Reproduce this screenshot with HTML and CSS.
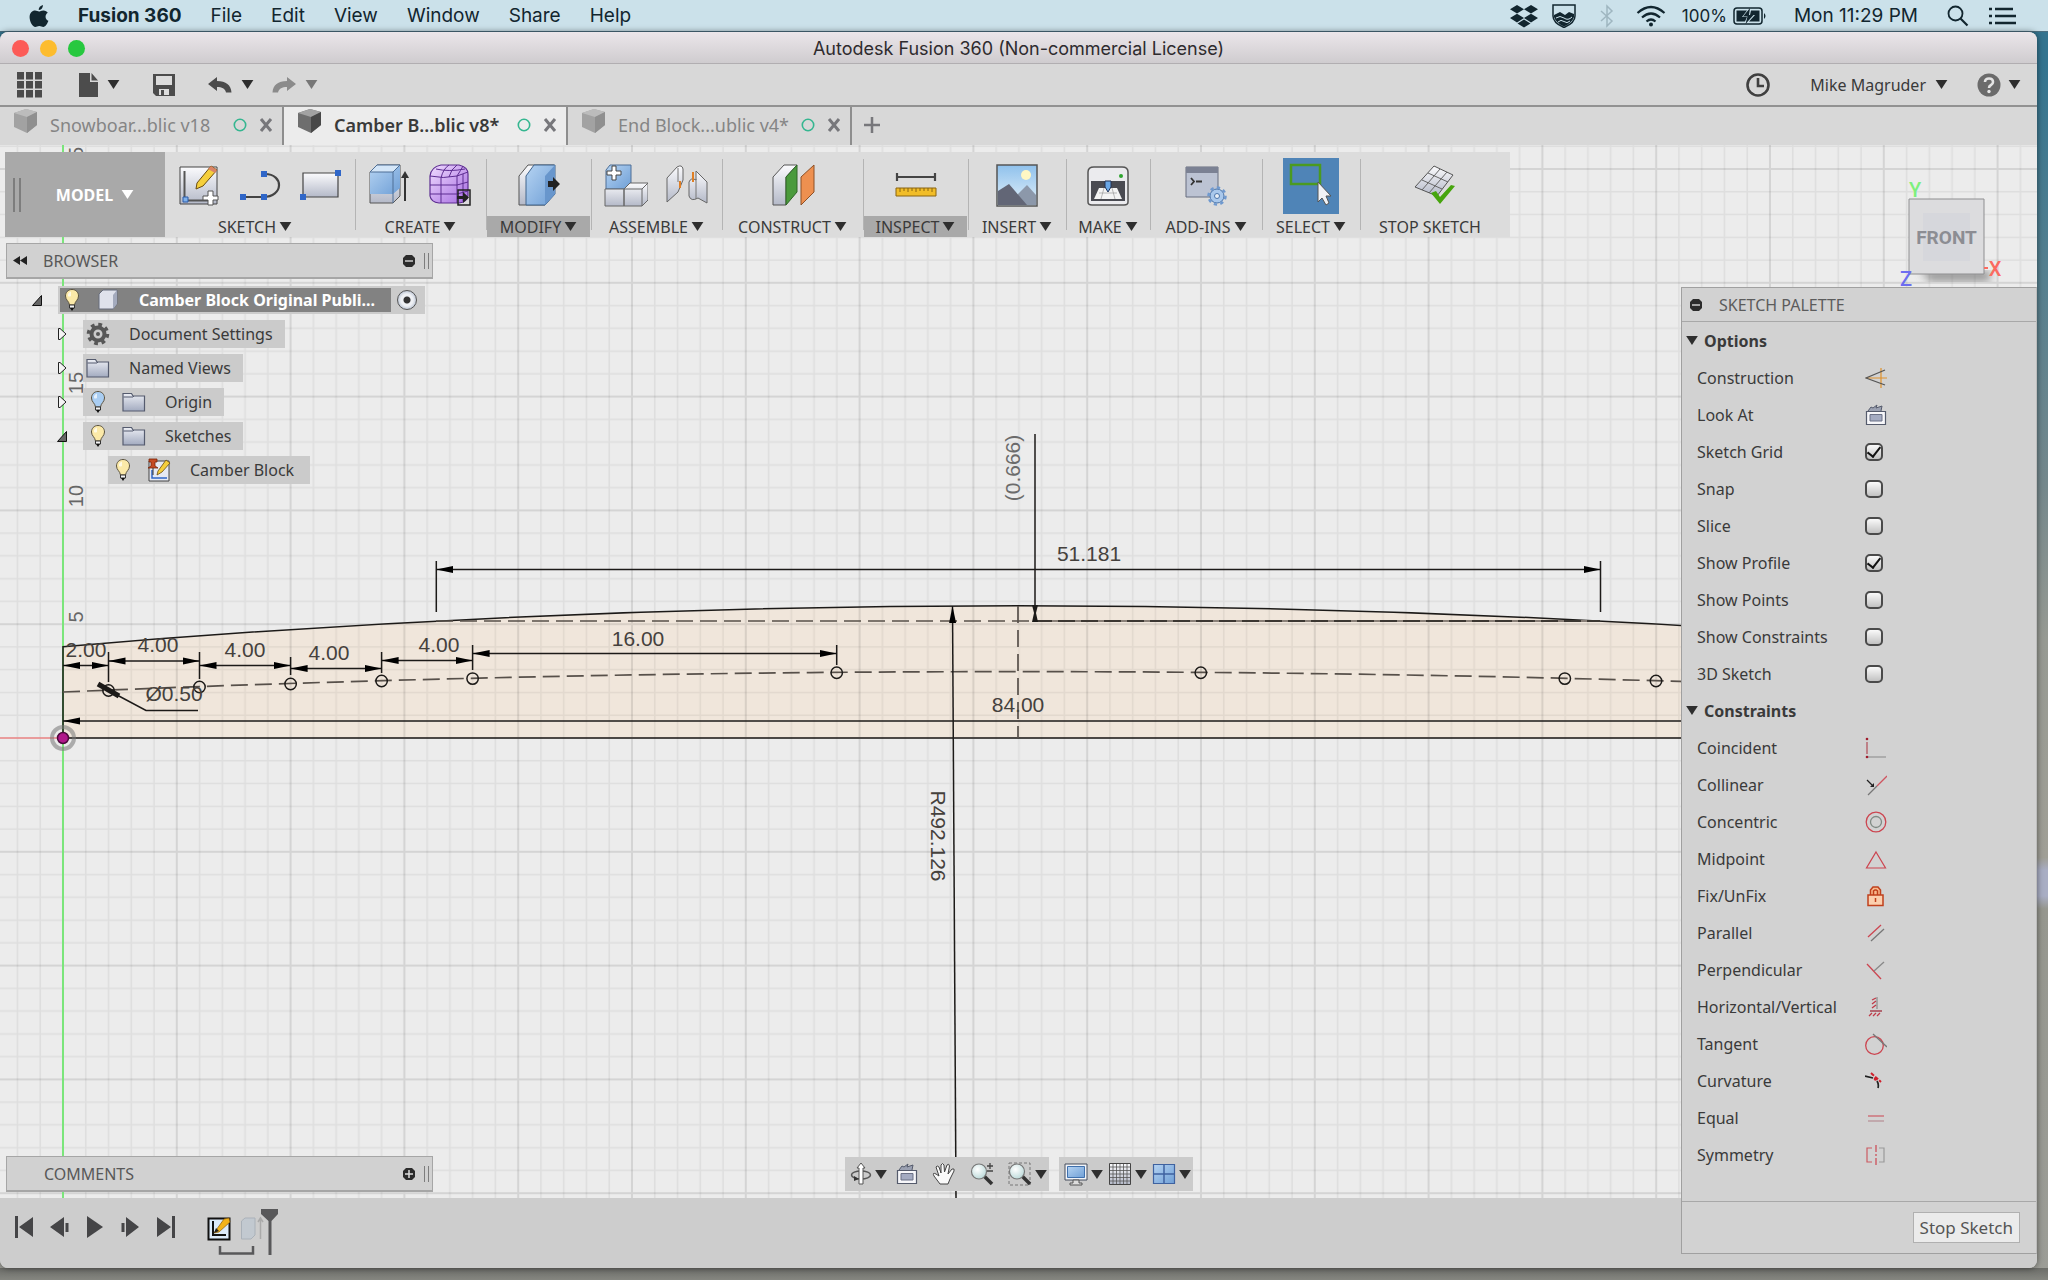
FILE: index.html
```html
<!DOCTYPE html>
<html lang="en">
<head>
<meta charset="utf-8">
<title>Autodesk Fusion 360 (Non-commercial License)</title>
<link rel="stylesheet" href="styles.css">
</head>
<body>
<svg class="sprite" width="0" height="0" aria-hidden="true">
  <defs>
    <linearGradient id="steel" x1="0" y1="0" x2="0" y2="1"><stop offset="0" stop-color="#fbfbfd"/><stop offset="1" stop-color="#b4b9c8"/></linearGradient>
    <linearGradient id="blue" x1="0" y1="0" x2="1" y2="1"><stop offset="0" stop-color="#b5d3f2"/><stop offset="1" stop-color="#6f9fd6"/></linearGradient>
    <linearGradient id="violet" x1="0" y1="0" x2="1" y2="1"><stop offset="0" stop-color="#f0dcff"/><stop offset="1" stop-color="#a56be0"/></linearGradient>
    <linearGradient id="sky" x1="0" y1="0" x2="0" y2="1"><stop offset="0" stop-color="#8fc1ec"/><stop offset="1" stop-color="#e3f1fa"/></linearGradient>
    <linearGradient id="folderFill" x1="0" y1="0" x2="0" y2="1"><stop offset="0" stop-color="#eceef4"/><stop offset="1" stop-color="#a3abc0"/></linearGradient>
    <radialGradient id="lens" cx=".4" cy=".35" r=".7"><stop offset="0" stop-color="#ffffff"/><stop offset="1" stop-color="#b9d8d8"/></radialGradient>
  </defs>
  <symbol id="caret" viewBox="0 0 13 10"><path d="M0 0H13L6.500 10Z"/></symbol>
  <symbol id="cube" viewBox="0 0 25 26"><path d="M1 5L13 1L24 4V17L14 25L1 19Z" fill="#6e6e6e"/><path d="M1 5L13 1L24 4L14 9Z" fill="#a2a2a2"/><path d="M14 9L24 4V17L14 25Z" fill="#484848"/></symbol>
  <symbol id="close" viewBox="0 0 14 14"><path d="M2 1L12 13M12 1L2 13" stroke="#77777b" stroke-width="3" fill="none"/></symbol>
  <symbol id="sync" viewBox="0 0 14 14"><circle cx="7" cy="7" r="5.700" fill="none" stroke="#35b690" stroke-width="1.600"/></symbol>
  <symbol id="bulb" viewBox="0 0 24 24"><path d="M12 1.500C8 1.500 5.500 4.500 5.500 8C5.500 12 9 13 9.500 17H14.500C15 13 18.500 12 18.500 8C18.500 4.500 16 1.500 12 1.500Z" stroke="#5b5340" stroke-width="1"/><path d="M9.500 17H14.500V20H9.500Z" fill="#f4f4f4" stroke="#333" stroke-width="1"/><path d="M10 20H14L12 23Z" fill="#111"/><path d="M8 6Q9 4 11 3.500V8Q9 9 8 8Z" fill="#fff" opacity=".7"/></symbol>
  <symbol id="folder" viewBox="0 0 24 24"><path d="M1 21V3.500H9.500L11 6H22.500V21Z" fill="url(#folderFill)" stroke="#555b6e" stroke-width="1.200"/><path d="M1.500 7H11L12 6" fill="none" stroke="#555b6e"/></symbol>
  <symbol id="open" viewBox="0 0 10 11"><path d="M9.500 .5V10.500H.5Z" fill="#666" stroke="#111"/></symbol>
  <symbol id="closed" viewBox="0 0 10 12"><path d="M1.500 .5H3L9 6L3 11.500H1.500Z" fill="#f4f4f4" stroke="#222"/></symbol>
  <symbol id="minus" viewBox="0 0 12 12"><path d="M3 0H9L12 3V9L9 12H3L0 9V3Z" fill="#2c2c2c"/><path d="M2 6H10" stroke="#ccc" stroke-width="1.500"/></symbol>
  <symbol id="plusdot" viewBox="0 0 12 12"><path d="M3 0H9L12 3V9L9 12H3L0 9V3Z" fill="#2c2c2c"/><path d="M2 6H10M6 2V10" stroke="#ddd" stroke-width="1.500"/></symbol>
  <symbol id="lookat" viewBox="0 0 22 22"><path d="M3 7L6 3L8 4L12 1L11 4L17 2L16 7" fill="#9ba1b2" stroke="#555b6c"/><path d="M1.500 7.500H20.500V20.500H1.500Z" fill="#f7f7fa" stroke="#555b6c" stroke-width="1.200"/><path d="M5 10.500H17V17H5Z" fill="#a4abc2" stroke="#6a7085"/></symbol>
</svg>

<header class="menubar">
  <nav class="menus" aria-label="Menu bar">
    <button class="menu apple" aria-label="Apple"><svg width="20" height="24" viewBox="0 0 20 24"><path d="M14 1C14 4 12 6 9.700 6C9.500 3.500 11.500 1.500 14 1Z"/><path d="M10 7.500C11 7.500 12.500 6.300 14.500 6.400C16.500 6.500 18 7.500 18.800 8.700C15.500 10.700 16 15.500 19.400 16.800C18.500 19.500 16.500 23 14.300 23C12.800 23 12.200 22 10.300 22C8.400 22 7.700 23 6.400 23C3.500 23 .6 17.500 .6 13.300C.6 9 3.300 6.600 6 6.600C7.700 6.600 9 7.500 10 7.500Z"/></svg></button>
    <button class="menu strong">Fusion 360</button>
    <button class="menu">File</button>
    <button class="menu">Edit</button>
    <button class="menu">View</button>
    <button class="menu">Window</button>
    <button class="menu">Share</button>
    <button class="menu">Help</button>
  </nav>
  <div class="status">
    <svg width="28" height="24" viewBox="0 0 28 24"><path d="M7 1L14 5.300L7 9.600L0 5.300ZM21 1L28 5.300L21 9.600L14 5.300ZM7 9.800L14 14L7 18.400L0 14ZM21 9.800L28 14L21 18.400L14 14ZM14 15.500L20.500 19.500L14 23.500L7.500 19.500Z"/></svg>
    <svg class="shield" width="24" height="24" viewBox="0 0 24 24"><path d="M1 1H23V12C23 18 18 21 12 23.500C6 21 1 18 1 12Z" fill="none" stroke="#12262f" stroke-width="1.500"/><path d="M2 11L8 8L13 11L17 8L22 10V13Q20 19 12 22.500Q4 19 2 13Z"/><path d="M4 14Q8 11 12 14T20 13M6 18Q9 15 12 17.500T18 17" stroke="#cbe1ea" fill="none"/></svg>
    <svg class="bluetooth" width="14" height="24" viewBox="0 0 14 24"><path d="M1 7L12 17L7 22V2L12 7L1 17" fill="none" stroke="#9fb6c0" stroke-width="1.500"/></svg>
    <svg class="wifi" width="30" height="22" viewBox="0 0 30 22"><g fill="none" stroke="#12262f" stroke-width="2.200"><path d="M1.500 8Q15 -4 28.500 8"/><path d="M6 12.500Q15 4.500 24 12.500"/><path d="M10.500 16.500Q15 12.500 19.500 16.500"/></g><circle cx="15" cy="19.500" r="2"/></svg>
    <span class="charge">100%</span>
    <svg width="34" height="18" viewBox="0 0 34 18"><rect x="1" y="1" width="28" height="16" rx="3" fill="none" stroke="#12262f" stroke-width="1.500"/><path d="M3.500 3.500H14L9 10H14L12 14.500H3.500ZM18 3.500H26.500V14.500H16L22 8H17Z"/><path d="M17 1L10 9.500H14.500L12.500 17L20.500 8H16Z"/><path d="M31 6Q34 9 31 12Z"/></svg>
    <time class="clock">Mon 11:29 PM</time>
    <svg class="search" width="22" height="22" viewBox="0 0 22 22"><circle cx="8.500" cy="8.500" r="7" fill="none" stroke="#12262f" stroke-width="1.800"/><path d="M13.500 13.500L20.500 20.500" stroke="#12262f" stroke-width="2.200"/></svg>
    <svg width="27" height="18" viewBox="0 0 27 18"><path d="M6 2H24M6 9H27M6 16H27" stroke="#12262f" stroke-width="2.500"/><path d="M0 2H3M0 9H3M0 16H3" stroke="#12262f" stroke-width="2.500"/></svg>
  </div>
</header>

<main class="window">
  <div class="titlebar">
    <div class="lights"><button class="light red" aria-label="Close"></button><button class="light amber" aria-label="Minimise"></button><button class="light green" aria-label="Zoom"></button></div>
    <h1 class="title">Autodesk Fusion 360 (Non-commercial License)</h1>
  </div>

  <div class="quickbar">
    <button class="quick" aria-label="Data panel"><svg width="25" height="26" viewBox="0 0 25 26"><path d="M0 0H7V7.500H0ZM9 0H16V7.500H9ZM18 0H25V7.500H18ZM0 9H7V16.500H0ZM9 9H16V16.500H9ZM18 9H25V16.500H18ZM0 18H7V25.500H0ZM9 18H16V25.500H9ZM18 18H25V25.500H18Z" fill="#4c4c4c"/></svg></button>
    <button class="quick" aria-label="File"><svg width="19" height="24" viewBox="0 0 19 24"><path d="M0 0H11V9H19V24H0ZM12.500 0L19 7.500H12.500Z" fill="#4c4c4c"/></svg><svg class="caret" width="13" height="9"><use href="#caret"/></svg></button>
    <button class="quick" aria-label="Save"><svg width="24" height="24" viewBox="0 0 24 24"><path d="M1 1H23V23H4L1 20Z" fill="#4c4c4c"/><path d="M4 3H20V12H4ZM7 16H17V22H7Z" fill="#dcdcdc"/><path d="M9 17H12V22H9Z" fill="#4c4c4c"/></svg></button>
    <button class="quick" aria-label="Undo"><svg width="24" height="16" viewBox="0 0 24 16"><path d="M9 0V4C18 4 23 8 23.500 15.500H18C17 11.500 14 10 9 10V14L0 7Z" fill="#4c4c4c"/></svg><svg class="caret" width="13" height="9"><use href="#caret"/></svg></button>
    <button class="quick dim" aria-label="Redo"><svg width="24" height="16" viewBox="0 0 24 16"><path d="M15 0V4C6 4 1 8 .5 15.500H6C7 11.500 10 10 15 10V14L24 7Z" fill="#8b8b8b"/></svg><svg class="caret" width="13" height="9"><use href="#caret"/></svg></button>
    <div class="account">
      <button class="quick" aria-label="Job status"><svg width="24" height="24" viewBox="0 0 24 24"><circle cx="12" cy="12" r="10.500" fill="none" stroke="#404040" stroke-width="2.600"/><path d="M12 5V13H18" fill="none" stroke="#404040" stroke-width="2.600"/></svg></button>
      <button class="quick user">Mike Magruder<svg class="caret" width="13" height="9"><use href="#caret"/></svg></button>
      <button class="quick help" aria-label="Help"><svg width="24" height="24" viewBox="0 0 24 24"><circle cx="12" cy="12" r="11.500" fill="#6b6b6b"/><path d="M8 9Q8 5.500 12 5.500T16 9Q16 11 14 12T12 15" fill="none" stroke="#e4e4e4" stroke-width="2.600"/><circle cx="12" cy="18.500" r="1.700" fill="#e4e4e4"/></svg><svg class="caret" width="13" height="9"><use href="#caret"/></svg></button>
    </div>
  </div>

  <div class="tabs">
    <div class="tab faded"><svg class="doc" width="25" height="26"><use href="#cube"/></svg><button class="tabname">Snowboar...blic v18</button><svg width="14" height="14"><use href="#sync"/></svg><button class="x" aria-label="Close tab"><svg width="14" height="14"><use href="#close"/></svg></button></div>
    <div class="tab current"><svg class="doc" width="25" height="26"><use href="#cube"/></svg><button class="tabname">Camber B...blic v8*</button><svg width="14" height="14"><use href="#sync"/></svg><button class="x" aria-label="Close tab"><svg width="14" height="14"><use href="#close"/></svg></button></div>
    <div class="tab faded"><svg class="doc" width="25" height="26"><use href="#cube"/></svg><button class="tabname">End Block...ublic v4*</button><svg width="14" height="14"><use href="#sync"/></svg><button class="x" aria-label="Close tab"><svg width="14" height="14"><use href="#close"/></svg></button></div>
    <button class="newtab" aria-label="New tab"><svg width="16" height="16" viewBox="0 0 16 16"><path d="M8 0V16M0 8H16" stroke="#77777b" stroke-width="2.500"/></svg></button>
  </div>

  <section class="viewport" aria-label="Canvas">
    <svg class="drawing" width="100%" height="100%">
      <defs>
        <pattern id="grid" patternUnits="userSpaceOnUse" x="63" y="24" width="113.800" height="113.800">
          <path d="M22.760 0V113.800M45.520 0V113.800M68.280 0V113.800M91.040 0V113.800M0 22.760H113.800M0 45.520H113.800M0 68.280H113.800M0 91.040H113.800" stroke="#000" stroke-opacity=".06" stroke-width="1.500"/>
          <path d="M0 0V113.800M113.800 0V113.800M0 0H113.800M0 113.800H113.800" stroke="#000" stroke-opacity=".1" stroke-width="2"/>
        </pattern>
        <marker id="arrow" markerUnits="userSpaceOnUse" markerWidth="18" markerHeight="8" refX="17" refY="4" orient="auto-start-reverse"><path d="M0 .5L17 4L0 7.500Z"/></marker>
      </defs>
      <g transform="translate(0 -145)">
        <path d="M63 738V646.700A11196 11196 0 0 1 1973 646.700V738Z" fill="#f0e6db"/>
      </g>
      <rect width="100%" height="100%" fill="url(#grid)"/>
      <g transform="translate(0 -145)" fill="none" stroke="#1c1a18" stroke-width="1.500">
        <path d="M63 145V738" stroke="#7be57b" stroke-width="2"/>
        <path d="M63 738V1198" stroke="#7be57b" stroke-width="2"/>
        <path d="M0 738H63" stroke="#f08a8a"/>
        <path d="M63 738V646.700A11196 11196 0 0 1 1973 646.700V738Z"/>
        <g stroke="#57504a" stroke-dasharray="17 7" stroke-width="1.700">
          <path d="M63 692A22392 22392 0 0 1 1973 692"/>
          <path d="M436 621H1035"/>
          <path d="M1018 606V738"/>
        </g>
        <path d="M1035 621H1600" stroke="#8a8078" stroke-width="2"/>
        <path d="M1035 621H1600" stroke-dasharray="17 6" stroke-width="2" stroke="#3c3732"/>
        <g>
          <circle cx="108.500" cy="690.500" r="5.700"/><circle cx="199.500" cy="687" r="5.700"/><circle cx="290.600" cy="684" r="5.700"/><circle cx="381.600" cy="681" r="5.700"/><circle cx="472.600" cy="678.600" r="5.700"/><circle cx="836.700" cy="672.700" r="5.700"/><circle cx="1200.800" cy="672.700" r="5.700"/><circle cx="1564.800" cy="678.600" r="5.700"/><circle cx="1656" cy="681" r="5.700"/>
        </g>
        <path d="M108.500 652V682M199.500 652V679M290.600 657V675M381.600 652V673M472.600 645V670M836.700 645V665M436.300 561V612M1600.500 561V612M1035 434V606"/>
        <g marker-start="url(#arrow)" marker-end="url(#arrow)">
          <path d="M63 665.500H108.500"/><path d="M108.500 661H199.500"/><path d="M199.500 665.500H290.600"/><path d="M290.600 668.500H381.600"/><path d="M381.600 660.500H472.600"/><path d="M472.600 653.500H836.700"/><path d="M436.300 569.500H1600.500"/>
        </g>
        <path d="M63 721H1973" marker-start="url(#arrow)"/>
        <path d="M952.500 606L956 1198" marker-start="url(#arrow)"/>
        <path d="M1032 605H1038L1036 613L1038 622H1032L1034 613Z" fill="#1c1a18" stroke="none"/>
        <path d="M98 684L119 696" stroke-width="5"/><path d="M117 695L146 710.500H198"/>
        <circle cx="63" cy="738" r="11" stroke="#777" stroke-opacity=".55" stroke-width="4"/>
        <circle cx="63" cy="738" r="5.500" fill="#b0188a" stroke="#4d0a3c"/>
      </g>
      <g transform="translate(0 -145)" class="dims">
        <text x="86" y="657">2.00</text><text x="158" y="652">4.00</text><text x="245" y="657">4.00</text><text x="329" y="660">4.00</text><text x="439" y="652">4.00</text>
        <text x="638" y="646">16.00</text><text x="1089" y="561">51.181</text><text x="1018" y="712">84.00</text><text x="174" y="701">Ø0.50</text>
        <text transform="translate(1020 468) rotate(-90)" class="driven">(0.666)</text>
        <text transform="translate(931 836) rotate(90)">R492.126</text>
        <g class="ruler">
          <text transform="translate(83 617) rotate(-90)">5</text><text transform="translate(83 496) rotate(-90)">10</text><text transform="translate(83 383) rotate(-90)">15</text><text transform="translate(83 158) rotate(-90)">25</text>
        </g>
      </g>
    </svg>

    <svg class="viewcube" width="112" height="118" viewBox="0 0 112 118">
      <defs><filter id="soft"><feGaussianBlur stdDeviation="4"/></filter></defs>
      <path d="M24 96H94V106H34Z" fill="#555" opacity=".6" filter="url(#soft)"/>
      <path d="M13 99V24H88V99Z" fill="#dcdcde" stroke="#8e8e90"/>
      <path d="M27 38H74V86H27Z" fill="#d6d7dc"/>
      <text x="50.500" y="69" class="face">FRONT</text>
      <text x="19" y="22" class="axis" fill="#7df07d">Y</text><text x="10" y="111" class="axis" fill="#6d6df0">Z</text><text x="99" y="101" class="axis" fill="#fb6b60">X</text>
      <path d="M88 93H92" stroke="#fb6b60" stroke-width="2"/>
    </svg>

    <div class="toolbar">
      <button class="workspace"><span class="grip"></span>MODEL<svg class="caret" width="13" height="9"><use href="#caret"/></svg></button>
      <div class="group wide"><div class="icons">
        <svg width="44" height="44" viewBox="0 0 44 44"><path d="M3 3H40V40H3Z" fill="url(#steel)" stroke="#444"/><path d="M7.500 7V36.500H32" fill="none" stroke="#555" stroke-width="2"/><path d="M6 33H11V38H6Z" fill="#7fb0ea" stroke="#2a5ba8"/><path d="M20 19L34 2L40 6L26 22L19 25Z" fill="#f5cf3c" stroke="#6a4d10"/><path d="M34 2L40 6L38 9L31 5Z" fill="#d98467"/><path d="M31 27H36V32H41V36H36V41H31V36H26V32H31Z" fill="#fff" stroke="#555"/></svg>
        <svg width="44" height="44" viewBox="0 0 44 44"><path d="M4 33H25M25 33C46 33 46 10 27 10" fill="none" stroke="#444" stroke-width="2.200"/><path d="M2 30H8V36H2ZM23 30H29V36H23ZM23 7H29V13H23Z" fill="#2f66c8"/></svg>
        <svg width="44" height="44" viewBox="0 0 44 44"><path d="M4 9H39V33H4Z" fill="url(#steel)" stroke="#444" stroke-width="1.200"/><path d="M36 6H42V12H36ZM1 30H7V36H1Z" fill="#2f66c8"/></svg>
      </div><button class="label">SKETCH<svg class="caret" width="13" height="9"><use href="#caret"/></svg></button></div>
      <div class="group"><div class="icons">
        <svg width="44" height="44" viewBox="0 0 44 44"><path d="M2 8L9 1H32V32L25 39H2Z" fill="url(#steel)" stroke="#555"/><path d="M2 8L9 1H32V24L25 30H2Z" fill="url(#blue)"/><path d="M2 8H25L32 1H9ZM25 8V39" fill="#d4e6f8" stroke="#4e6f96"/><path d="M37 37V10" stroke="#333" stroke-width="2"/><path d="M33 14L37 7L41 14Z" fill="#333"/></svg>
        <svg width="44" height="44" viewBox="0 0 44 44"><path d="M12 1H30Q39 3 39 10V32Q38 38 30 39H10Q2 38 1 32V12Q2 3 12 1Z" fill="url(#violet)" stroke="#5d2d91" stroke-width="1.200"/><path d="M1 12Q14 15 28 12L39 8M1 21H28L39 18M1 30H28L39 27M12 14V39M28 12V39M12 14Q14 5 20 1M28 12Q32 6 34 2M20 13Q22 5 28 1M34 10V37M7 5Q20 8 36 5" fill="none" stroke="#5d2d91"/><path d="M29 26H41V41H29Z" fill="none" stroke="#222" stroke-width="1.500"/><path d="M28 32H34V28L40 33.500L34 39V35H28Z" fill="#222"/></svg>
      </div><button class="label">CREATE<svg class="caret" width="13" height="9"><use href="#caret"/></svg></button></div>
      <div class="group on"><div class="icons">
        <svg width="44" height="44" viewBox="0 0 44 44"><path d="M2 12L11 1H37V30L28 41H2Z" fill="url(#steel)" stroke="#555"/><path d="M9 12L17 1H38V30L28 41H9Z" fill="url(#blue)" stroke="#41648c"/><path d="M28 12L38 1V30L28 41Z" fill="#6896cc"/><path d="M31 17H36V13L43 20L36 27V23H31Z" fill="#222"/></svg>
      </div><button class="label">MODIFY<svg class="caret" width="13" height="9"><use href="#caret"/></svg></button></div>
      <div class="group"><div class="icons">
        <svg width="44" height="44" viewBox="0 0 44 44"><path d="M2 6L6 1H27V19L20 25H2Z" fill="url(#blue)" stroke="#4e6f96"/><path d="M1 25H20V42H1ZM20 25L26 19H44V36L38 42H20Z" fill="url(#steel)" stroke="#666"/><path d="M20 25H38V42M38 25L44 19" fill="none" stroke="#666"/><path d="M8 2H12V7H17V11H12V16H8V11H3V7H8Z" fill="#fff" stroke="#444"/></svg>
        <svg width="44" height="44" viewBox="0 0 44 44"><path d="M2 14L12 3Q17 0 18 5V16L13 28L2 38Z" fill="url(#steel)" stroke="#666"/><path d="M24 18Q26 13 31 16V7L42 18V39L33 34Q26 38 24 32Z" fill="url(#steel)" stroke="#666"/><path d="M13 4V18M31 15V35" stroke="#777"/><path d="M15 17V24M28 8V18" stroke="#e07f25" stroke-width="2"/></svg>
      </div><button class="label">ASSEMBLE<svg class="caret" width="13" height="9"><use href="#caret"/></svg></button></div>
      <div class="group"><div class="icons">
        <svg width="44" height="44" viewBox="0 0 44 44"><path d="M2 13L13 1H26L15 13V41H2Z" fill="url(#steel)" stroke="#555"/><path d="M15 13L26 1V28L15 41Z" fill="#4a9a3c" stroke="#2f6427"/><path d="M30 13L43 1V28L30 41Z" fill="#ee9050" stroke="#8d5027"/></svg>
      </div><button class="label">CONSTRUCT<svg class="caret" width="13" height="9"><use href="#caret"/></svg></button></div>
      <div class="group on"><div class="icons">
        <svg width="44" height="44" viewBox="0 0 44 44"><path d="M3 13H41M3 9V17M41 9V17" stroke="#444" stroke-width="2.200"/><path d="M2 24H42V32H2Z" fill="#f1bd28" stroke="#8a6410"/><path d="M6 24V28M10 24V27M14 24V28M18 24V27M22 24V28M26 24V27M30 24V27M34 24V27M38 24V28" stroke="#8a6410"/></svg>
      </div><button class="label">INSPECT<svg class="caret" width="13" height="9"><use href="#caret"/></svg></button></div>
      <div class="group"><div class="icons">
        <svg width="44" height="44" viewBox="0 0 44 44"><path d="M2 1H42V42H2Z" fill="url(#sky)" stroke="#555" stroke-width="1.500"/><circle cx="31" cy="11" r="5" fill="#fff7c4"/><path d="M20 33L32 21L41 31V41H20Z" fill="#8c98aa"/><path d="M3 27L14 20L32 41H3Z" fill="#626676"/></svg>
      </div><button class="label">INSERT<svg class="caret" width="13" height="9"><use href="#caret"/></svg></button></div>
      <div class="group"><div class="icons">
        <svg width="44" height="44" viewBox="0 0 44 44"><path d="M2 14V8Q2 3 8 3H36Q42 3 42 8V38Q42 41 38 41H6Q2 41 2 38Z" fill="#ebebee" stroke="#555" stroke-width="1.500"/><path d="M5 17H39V37H5Z" fill="#4a4b52"/><path d="M13 24H31L36 35H8Z" fill="#f4f4f4"/><path d="M19 17H25V23L22 28L19 23Z" fill="#6aa7e6" stroke="#235"/><path d="M13 29H31M18 24L15 35M26 24L29 35" stroke="#999" stroke-width=".7"/><circle cx="35" cy="12" r="2" fill="#2fa52f"/></svg>
      </div><button class="label">MAKE<svg class="caret" width="13" height="9"><use href="#caret"/></svg></button></div>
      <div class="group"><div class="icons">
        <svg width="44" height="44" viewBox="0 0 44 44"><path d="M2 3H34V33H2Z" fill="#bcc3d3" stroke="#666d7f"/><path d="M2 3H34V9H2Z" fill="#7b8193"/><path d="M7 14L10 17.500L7 21M12 17.500H18" fill="none" stroke="#333" stroke-width="1.800"/><circle cx="33" cy="32" r="7" fill="#a9c8ec" stroke="#4c76ab"/><circle cx="33" cy="32" r="8.500" fill="none" stroke="#6f99cf" stroke-width="2.500" stroke-dasharray="3.300 3.300"/><circle cx="33" cy="32" r="2.500" fill="#e8eef6" stroke="#4c76ab"/></svg>
      </div><button class="label">ADD-INS<svg class="caret" width="13" height="9"><use href="#caret"/></svg></button></div>
      <div class="group"><div class="icons">
        <svg class="picked" width="56" height="56" viewBox="0 0 56 56"><path d="M8 7H37V26H8Z" fill="none" stroke="#4b9a20" stroke-width="2.500"/><path d="M35 24V44L39 40L43 47L46 45L43 38H48Z" fill="#f0f2f6" stroke="#555"/></svg>
      </div><button class="label">SELECT<svg class="caret" width="13" height="9"><use href="#caret"/></svg></button></div>
      <div class="group wide"><div class="icons">
        <svg width="44" height="44" viewBox="0 0 44 44"><path d="M21 2L40 11L24 32L2 23Z" fill="url(#steel)" stroke="#555"/><path d="M15 9L35 18M9 16L29 25M27 5L9 26M34 8L16 29" stroke="#666"/><path d="M18 29L23 27L27 33L38 21L42 22L27 40Z" fill="#47a50e"/></svg>
      </div><button class="label">STOP SKETCH</button></div>
    </div>

    <aside class="browser">
      <div class="panelhead"><svg width="14" height="9" viewBox="0 0 14 9"><path d="M7 0V9L0 4.500ZM14 0V9L7 4.500Z" fill="#222"/></svg><h2>BROWSER</h2><button class="dot" aria-label="Collapse"><svg width="12" height="12"><use href="#minus"/></svg></button><span class="grip small"></span></div>
      <ul class="tree">
        <li class="node l0"><svg class="twist" width="10" height="11"><use href="#open"/></svg><div class="chip root"><span class="name"><svg width="24" height="24" fill="#fbe9a8"><use href="#bulb"/></svg><svg width="24" height="24" viewBox="0 0 24 24"><path d="M3 6L7 2H21V16L17 21H3Z" fill="#dfe2ec" stroke="#666c7c"/><path d="M17 21V7L21 2V16Z" fill="#a3aabd"/></svg><b>Camber Block Original Publi...</b></span><input type="radio" checked aria-label="Activate component"></div></li>
        <li class="node l1"><svg class="twist" width="10" height="12"><use href="#closed"/></svg><div class="chip"><svg width="24" height="24" viewBox="0 0 24 24"><circle cx="12" cy="12" r="6.500" fill="none" stroke="#575757" stroke-width="4"/><circle cx="12" cy="12" r="9.500" fill="none" stroke="#575757" stroke-width="3.500" stroke-dasharray="3.730 3.730"/><circle cx="12" cy="12" r="2" fill="#575757"/></svg><span>Document Settings</span></div></li>
        <li class="node l1"><svg class="twist" width="10" height="12"><use href="#closed"/></svg><div class="chip"><svg width="24" height="24"><use href="#folder"/></svg><span>Named Views</span></div></li>
        <li class="node l1"><svg class="twist" width="10" height="12"><use href="#closed"/></svg><div class="chip"><svg width="24" height="24" fill="#a9cdf2"><use href="#bulb"/></svg><svg width="24" height="24"><use href="#folder"/></svg><span>Origin</span></div></li>
        <li class="node l1"><svg class="twist" width="10" height="11"><use href="#open"/></svg><div class="chip"><svg width="24" height="24" fill="#fbe9a8"><use href="#bulb"/></svg><svg width="24" height="24"><use href="#folder"/></svg><span>Sketches</span></div></li>
        <li class="node l2"><span class="twist"></span><div class="chip"><svg width="24" height="24" fill="#fbe9a8"><use href="#bulb"/></svg><svg width="24" height="24" viewBox="0 0 24 24"><path d="M2 3H22V23H2Z" fill="#e6e9f2" stroke="#444"/><path d="M5 12V20H20" fill="none" stroke="#2f66c8" stroke-width="1.500"/><path d="M11 13L19 2L23 5L15 14L10 17Z" fill="#f5cf3c" stroke="#6a4d10" stroke-width=".8"/><path d="M2 1H10V4H8V8L11 10H1L4 8V4H2Z" fill="#c54a22" stroke="#7a2508" stroke-width=".8"/><path d="M6 10V17" stroke="#333"/></svg><span>Camber Block</span></div></li>
      </ul>
    </aside>

    <div class="bottom">
      <div class="panelhead comments"><h2>COMMENTS</h2><button class="dot" aria-label="Expand"><svg width="12" height="12"><use href="#plusdot"/></svg></button><span class="grip small"></span></div>
      <div class="nav">
        <div class="navset">
          <button class="tool" aria-label="Orbit"><svg width="22" height="24" viewBox="0 0 22 24"><ellipse cx="11" cy="13" rx="9.500" ry="4" fill="none" stroke="#555" stroke-width="1.500"/><path d="M11 1L15 6H13V22H9V6H7Z" fill="#fff" stroke="#555"/><path d="M4 14L9 17L4 19Z" fill="#333"/></svg><svg class="caret" width="12" height="9"><use href="#caret"/></svg></button>
          <button class="tool look" aria-label="Look at"><svg width="22" height="22"><use href="#lookat"/></svg></button>
          <button class="tool" aria-label="Pan"><svg width="24" height="24" viewBox="0 0 24 24"><path d="M8 22L2 14Q0 10 4 12L7 14L4 5Q5 3 7 5L9 11V3Q10.500 0 12 3L12.500 10L15 3Q17 1 17.500 4L16 12L20 7Q23 6 22 9L18 17L16 22Z" fill="#fafafa" stroke="#444"/></svg></button>
          <button class="tool" aria-label="Zoom"><svg width="24" height="24" viewBox="0 0 24 24"><path d="M14 14L22 22" stroke="#333" stroke-width="3.500"/><circle cx="9" cy="9.500" r="7.500" fill="url(#lens)" stroke="#777" stroke-width="1.200"/><path d="M17 4H23M20 1V7M17 9H23" stroke="#444" stroke-width="1.300"/></svg></button>
          <button class="tool" aria-label="Zoom window"><svg width="24" height="24" viewBox="0 0 24 24"><path d="M1 1H22V23H1Z" fill="none" stroke="#777" stroke-dasharray="3 2"/><path d="M14 14L22 22" stroke="#333" stroke-width="3.500"/><circle cx="9" cy="9.500" r="7.500" fill="url(#lens)" stroke="#777" stroke-width="1.200"/></svg><svg class="caret" width="12" height="9"><use href="#caret"/></svg></button>
        </div>
        <div class="navset second">
          <button class="tool" aria-label="Display settings"><svg width="24" height="24" viewBox="0 0 24 24"><path d="M1 2H23V18H1Z" fill="#f2f4f8" stroke="#444c5c"/><path d="M3.500 4.500H20.500V15.500H3.500Z" fill="url(#blue)" stroke="#3f70ad"/><path d="M9 18H15V21H18V23H6V21H9Z" fill="#ddd" stroke="#555"/></svg><svg class="caret" width="12" height="9"><use href="#caret"/></svg></button>
          <button class="tool" aria-label="Grid and snaps"><svg width="24" height="24" viewBox="0 0 24 24"><path d="M1.500 1.500H22.500V22.500H1.500Z" fill="url(#steel)" stroke="#444"/><path d="M5 2V22M8.500 2V22M12 2V22M15.500 2V22M19 2V22M2 5H22M2 8.500H22M2 12H22M2 15.500H22M2 19H22" stroke="#555" stroke-width=".8"/></svg><svg class="caret" width="12" height="9"><use href="#caret"/></svg></button>
          <button class="tool" aria-label="Viewports"><svg width="24" height="22" viewBox="0 0 24 22"><path d="M1.500 1.500H22.500V20.500H1.500Z" fill="url(#blue)" stroke="#3f62a0" stroke-width="1.200"/><path d="M12 2V20M2 11H22" stroke="#3f62a0" stroke-width="1.500"/></svg><svg class="caret" width="12" height="9"><use href="#caret"/></svg></button>
        </div>
      </div>
    </div>
  </section>

  <footer class="timeline">
    <div class="playback">
      <button aria-label="Go to start"><svg width="18" height="22" viewBox="0 0 18 22"><path d="M0 0H3V22H0ZM18 1V21L4 11Z"/></svg></button>
      <button aria-label="Step back"><svg width="19" height="22" viewBox="0 0 19 22"><path d="M14 1V21L0 11ZM15.500 7H18.500V16H15.500Z"/></svg></button>
      <button aria-label="Play"><svg width="18" height="22" viewBox="0 0 18 22"><path d="M1 0V22L17 11Z"/></svg></button>
      <button aria-label="Step forward"><svg width="19" height="22" viewBox="0 0 19 22"><path d="M5 1V21L18 11ZM.5 7H3.500V16H.5Z"/></svg></button>
      <button aria-label="Go to end"><svg width="18" height="22" viewBox="0 0 18 22"><path d="M0 1V21L14 11ZM15 0H18V22H15Z"/></svg></button>
    </div>
    <svg class="history" width="72" height="46" viewBox="0 0 72 46"><path d="M1.500 9.500H22.500V30.500H1.500Z" fill="#dceafa" stroke="#111" stroke-width="2"/><path d="M6 12V26H19" fill="none" stroke="#111" stroke-width="2"/><path d="M7 24L17 10L22 9L23 13L12 23Z" fill="#f3b21a" stroke="#8a5c08" stroke-width=".7"/><path d="M7 24L9 19L12 22Z" fill="#222"/><path d="M34.500 12L38 9H48V26L44 30H34.500Z" fill="#c2c9d0" stroke="#aab1b9"/><path d="M53.500 30V10M51 13L53.500 9L56 13" stroke="#aaa" fill="none" stroke-width="1.500"/><path d="M13 37V44.500H46V37" fill="none" stroke="#58585a" stroke-width="2.500"/><path d="M54 0H71V5L64.500 12V46H61.500V12L54 5Z" fill="#58585a"/></svg>
  </footer>

  <form class="palette" onsubmit="return false">
    <div class="palettehead"><button class="dot" type="button" aria-label="Collapse"><svg width="12" height="12"><use href="#minus"/></svg></button><h2>SKETCH PALETTE</h2></div>
    <div class="rows">
      <h3><svg class="caret" width="12" height="9"><use href="#caret"/></svg>Options</h3>
      <div class="row"><label for="construction">Construction</label><button type="button" id="construction"><svg width="22" height="22" viewBox="0 0 22 22"><path d="M1 11H22M16 1V21" stroke="#e0922c" stroke-width="1.200"/><path d="M20 3L1 11L20 18" fill="none" stroke="#555" stroke-width="1.300"/></svg></button></div>
      <div class="row"><label for="look">Look At</label><button type="button" id="look"><svg width="22" height="22"><use href="#lookat"/></svg></button></div>
      <div class="row"><label for="sgrid">Sketch Grid</label><input type="checkbox" id="sgrid" checked></div>
      <div class="row"><label for="snap">Snap</label><input type="checkbox" id="snap"></div>
      <div class="row"><label for="slice">Slice</label><input type="checkbox" id="slice"></div>
      <div class="row"><label for="profile">Show Profile</label><input type="checkbox" id="profile" checked></div>
      <div class="row"><label for="points">Show Points</label><input type="checkbox" id="points"></div>
      <div class="row"><label for="cons">Show Constraints</label><input type="checkbox" id="cons"></div>
      <div class="row"><label for="sk3d">3D Sketch</label><input type="checkbox" id="sk3d"></div>
      <h3><svg class="caret" width="12" height="9"><use href="#caret"/></svg>Constraints</h3>
      <div class="row"><label for="coin">Coincident</label><button type="button" id="coin"><svg width="22" height="22" viewBox="0 0 22 22"><path d="M2 5V17" stroke="#b04a55" stroke-width="1.200"/><path d="M2 20H21" stroke="#888"/><circle cx="2" cy="2" r="1.300" fill="#a01c2c"/><circle cx="2" cy="20" r="1.300" fill="#a01c2c"/></svg></button></div>
      <div class="row"><label for="coll">Collinear</label><button type="button" id="coll"><svg width="22" height="22" viewBox="0 0 22 22"><path d="M3 21L12 12" stroke="#777" stroke-width="1.300"/><path d="M12 12L22 2" stroke="#cf5560" stroke-width="1.300"/><path d="M2 6L8 12" stroke="#222" stroke-width="1.200"/><path d="M9 9V13H5Z" fill="#222"/></svg></button></div>
      <div class="row"><label for="conc">Concentric</label><button type="button" id="conc"><svg width="22" height="22" viewBox="0 0 22 22"><circle cx="11" cy="11" r="9.800" fill="none" stroke="#cc4550" stroke-width="1.300"/><circle cx="11" cy="11" r="5.500" fill="none" stroke="#808a84" stroke-width="1.300"/></svg></button></div>
      <div class="row"><label for="mid">Midpoint</label><button type="button" id="mid"><svg width="22" height="22" viewBox="0 0 22 22"><path d="M11 4L20.500 20H1.500Z" fill="none" stroke="#cc4550" stroke-width="1.200"/></svg></button></div>
      <div class="row"><label for="fix">Fix/UnFix</label><button type="button" id="fix"><svg width="22" height="22" viewBox="0 0 22 22"><path d="M5.500 10V5L8 2H13L15.500 5V10M8.500 10V6L10 5H11L12.500 6V10" fill="#f8b98c" stroke="#c0401c" stroke-width="1.500"/><path d="M3 10H18V20.500H3Z" fill="#fbcfae" stroke="#c0401c" stroke-width="1.500"/><path d="M10.500 13V17" stroke="#c0401c" stroke-width="1.500"/></svg></button></div>
      <div class="row"><label for="para">Parallel</label><button type="button" id="para"><svg width="22" height="22" viewBox="0 0 22 22"><path d="M3 15L16 3" stroke="#cc4550" stroke-width="1.300"/><path d="M6 19L19 7" stroke="#777" stroke-width="1.300"/></svg></button></div>
      <div class="row"><label for="perp">Perpendicular</label><button type="button" id="perp"><svg width="22" height="22" viewBox="0 0 22 22"><path d="M2 5L16 20" stroke="#cc4550" stroke-width="1.300"/><path d="M9 12L19 3" stroke="#888" stroke-width="1.300"/></svg></button></div>
      <div class="row"><label for="hv">Horizontal/Vertical</label><button type="button" id="hv"><svg width="22" height="22" viewBox="0 0 22 22"><path d="M12 1V13" stroke="#999" stroke-width="1.500"/><path d="M5 15H17" stroke="#a02c3c" stroke-width="1.300"/><path d="M7 4L11 2M7 8L11 5M7 12L11 9M4 20L7 17M8 20L11 17M12 20L15 17" stroke="#c03a48" stroke-width="1.300"/></svg></button></div>
      <div class="row"><label for="tan">Tangent</label><button type="button" id="tan"><svg width="22" height="22" viewBox="0 0 22 22"><circle cx="9.500" cy="12.500" r="8.800" fill="none" stroke="#cc4550" stroke-width="1.300"/><path d="M8 1L22 14" stroke="#777" stroke-width="1.300"/></svg></button></div>
      <div class="row"><label for="curv">Curvature</label><button type="button" id="curv"><svg width="22" height="22" viewBox="0 0 22 22"><path d="M0 6L8 8M12 11Q14 14 13 18" stroke="#222" fill="none" stroke-width="1.700"/><path d="M6 3L16 12" stroke="#d0202c" stroke-width="2" stroke-dasharray="4 1.500"/><circle cx="10.500" cy="9" r="1.800" fill="#d0202c"/></svg></button></div>
      <div class="row"><label for="eq">Equal</label><button type="button" id="eq"><svg width="22" height="22" viewBox="0 0 22 22"><path d="M3 9H19" stroke="#cc4550" stroke-width="1.200"/><path d="M3 14H19" stroke="#b08088" stroke-width="1.200"/></svg></button></div>
      <div class="row"><label for="sym">Symmetry</label><button type="button" id="sym"><svg width="22" height="22" viewBox="0 0 22 22"><path d="M7 4H2V18H7" fill="none" stroke="#cc5a62" stroke-width="1.200"/><path d="M11 1V21" stroke="#cc4550" stroke-width="1.200" stroke-dasharray="7 2 2 2"/><path d="M14 4H19V18H14" fill="none" stroke="#999" stroke-width="1.200"/></svg></button></div>
    </div>
    <div class="palettefoot"><button type="button" class="stop">Stop Sketch</button></div>
  </form>
</main>
</body>
</html>
```

FILE: styles.css
```css
* { box-sizing: border-box; }
body {
  margin: 0;
  height: 100vh;
  display: flex;
  flex-direction: column;
  overflow: hidden;
  font-family: "Noto Sans", "Open Sans", sans-serif;
  font-size: 16px;
  color: #3a3a3a;
  background:
    linear-gradient(#6c6d69, #858680) bottom / 100% 12px no-repeat,
    linear-gradient(#34748f 5%, #56808f 22%, #75888c 38%, #979a93 50%, #a09f96 67%, #a9aec4 68%, #a9aec4 70%, #96978f 71%, #9c9d97);
}
button { font: inherit; color: inherit; background: none; border: 0; padding: 0; margin: 0; display: flex; align-items: center; }
h1, h2, h3, ul { margin: 0; padding: 0; font-size: inherit; font-weight: 400; list-style: none; }
svg { display: block; flex: none; }
.sprite { position: absolute; }
.caret { fill: #2e2e2e; }

/* system menu bar */
.menubar { height: 32px; flex: none; display: flex; justify-content: space-between; background: #cbe1ea; border-bottom: 1px solid #4c6f80; padding: 0 32px 0 29px; font-family: Inter, sans-serif; font-size: 19px; color: #12262f; fill: #12262f; }
.menus, .status { display: flex; align-items: center; }
.menus { gap: 29px; }
.strong { font-weight: 700; }
.shield { margin-left: 14px; }
.bluetooth { margin-left: 24px; }
.wifi { margin-left: 22px; }
.charge { margin: 0 6px 0 16px; font-size: 17px; }
.clock { margin: 0 29px 0 27px; }
.search { margin-right: 20px; }

/* application window */
.window { position: relative; flex: 1; min-height: 0; margin: 0 11px 12px 0; display: flex; flex-direction: column; background: #cdcdcd; border-radius: 8px; overflow: hidden; box-shadow: 0 0 6px rgba(0, 0, 0, .5); }
.titlebar { height: 32px; flex: none; display: grid; grid-template-columns: 1fr auto 1fr; align-items: center; padding: 2px 12px 0; background: linear-gradient(#ebe6ea, #cfcccf); border-bottom: 1px solid #b1aeb1; }
.lights { display: flex; gap: 11px; }
.light { width: 17px; height: 17px; border-radius: 50%; }
.red { background: #fc5b57; }
.amber { background: #fdbc2e; }
.green { background: #27c83f; }
.title { font-family: Inter, sans-serif; font-size: 18px; color: #2e2b2e; }

.quickbar { height: 43px; flex: none; display: flex; align-items: center; padding: 0 16px 0 17px; background: #d8d8d8; border-bottom: 2px solid #929292; }
.quick { gap: 8px; margin-right: 32px; }
.quick:first-child { margin-right: 37px; }
.quick .caret { margin-left: 1px; }
.dim, .dim .caret { fill: #777; }
.quick.dim { margin-left: -14px; }
.account { display: flex; margin-left: auto; }
.account .quick { margin-right: 0; }
.account .user { margin: 0 29px 0 40px; }
.account .help { gap: 6px; }

.tabs { height: 38px; flex: none; display: flex; background: #d8d8d8; }
.tab { width: 284px; display: flex; align-items: center; padding: 0 9px 2px 13px; border-right: 2px solid #8e8e8e; }
.tab.current { background: #ececec; font-weight: 600; }
.doc { margin: -8px 12px 0 0; }
.faded .doc { opacity: .5; }
.faded .tabname { color: #858585; }
.tabname { margin-right: auto; white-space: nowrap; font-size: 18px; }
.x { margin-left: 12px; }
.newtab { margin-left: 12px; padding-bottom: 2px; }

.viewport { position: relative; flex: 1; min-height: 0; display: flex; flex-direction: column; padding: 7px 5px 6px; background: #ececec; }
.drawing { position: absolute; inset: 0; }
.dims { font-family: "Liberation Sans", sans-serif; font-size: 21px; text-anchor: middle; fill: #45413d; }
.driven { fill: #6b6b6b; }
.ruler { font-size: 20px; fill: #666; }
.viewcube { position: absolute; top: 30px; right: 29px; }
.face { font: 700 19px Roboto, sans-serif; text-anchor: middle; fill: #8c8d93; }
.axis { font: 500 20px Roboto, sans-serif; text-anchor: middle; }

.toolbar { position: relative; align-self: flex-start; height: 85px; flex: none; display: grid; grid-template-columns: 160px 190px 131px 105px 131px 141px 105px 98px 84px 112px 98px 150px; background: #dcdcdc; }
.workspace { position: relative; justify-content: center; gap: 8px; padding-left: 20px; background: #a9a9a9; color: #fff; font-weight: 700; }
.workspace .caret { fill: #fff; }
.grip { width: 8px; height: 34px; border: solid #7d7d7d; border-width: 0 2px; }
.workspace .grip { position: absolute; left: 8px; }
.group { display: grid; grid-template-rows: 64px 21px; position: relative; }
.group + .group::before { content: ""; position: absolute; left: 0; top: 7px; bottom: 7px; width: 1px; background: #b4b4b4; }
.icons { display: flex; justify-content: center; align-items: center; gap: 17px; padding-top: 3px; }
.label { justify-content: center; gap: 3px; white-space: nowrap; }
.group.wide .label { padding-right: 10px; }
.group.on .label { background: #a9a9a9; margin: 0 1px; }
.picked { background: #4f84b7; }

.browser { position: relative; width: 427px; margin-top: 6px; margin-left: 1px; }
.panelhead { height: 36px; display: flex; align-items: center; padding: 0 3px 0 6px; background: #d1d1d1; border: 1px solid #a6a6a6; border-bottom-width: 2px; color: #585858; }
.panelhead h2 { margin: 0 auto 0 16px; }
.dot { margin-right: 9px; }
.grip.small { width: 5px; height: 16px; border-width: 0 1px; }
.tree { margin-top: 7px; display: grid; gap: 6px; }
.node { display: flex; align-items: center; gap: 16px; }
.l0 { padding-left: 26px; }
.l1 { padding-left: 51px; }
.l2 { padding-left: 76px; }
.twist { width: 10px; }
.chip { height: 28px; display: flex; align-items: center; gap: 12px; padding: 0 12px 0 3px; background: #cbcbcb; white-space: nowrap; }
.chip span:last-child { margin-left: 7px; }
.l2 .chip { padding-right: 16px; }
.chip.root { padding: 0 8px 0 2px; gap: 5px; }
.chip .name { height: 24px; width: 331px; display: flex; align-items: center; gap: 12px; background: #828282; color: #fff; }
.name b { margin-left: 7px; }
input[type="radio"] { appearance: none; width: 20px; height: 20px; margin: 0 0 0 1px; border: 1px solid #555; border-radius: 50%; background: radial-gradient(#333 0 3px, #eef0f4 4px 6px, #c3cbd8 9px); }

.bottom { position: relative; margin-top: auto; margin-left: 1px; display: grid; grid-template-columns: 1fr auto 1fr; align-items: center; }
.comments { width: 427px; padding-left: 21px; }
.nav { display: flex; gap: 10px; }
.navset { height: 34px; display: flex; align-items: center; gap: 14px; padding: 0 2px 0 5px; background: #cbcbcb; }
.navset.second { gap: 5px; }
.tool { gap: 3px; }
.tool.look { margin-left: -5px; }

.timeline { height: 70px; flex: none; display: flex; align-items: flex-start; gap: 32px; padding: 11px 15px 0; background: #cdcdcd; }
.playback { display: flex; gap: 17px; padding-top: 7px; fill: #454547; }

.palette { position: absolute; right: 0; top: 255px; bottom: 14px; width: 356px; display: flex; flex-direction: column; background: #d2d2d2; border: 1px solid #a0a0a0; border-right-color: #bdbdbd; }
.palettehead { height: 34px; display: flex; align-items: center; gap: 8px; padding-left: 8px; border-bottom: 1px solid #a8a8a8; color: #5c5c5c; }
.rows { flex: 1; display: grid; grid-auto-rows: 37px; align-content: start; }
.rows h3 { display: flex; align-items: center; gap: 6px; padding-left: 4px; font-weight: 700; }
.row { display: grid; grid-template-columns: 168px 22px; align-items: center; padding-left: 15px; }
.palette input { appearance: none; width: 18px; height: 18px; margin: 0; display: grid; place-items: center; border: 2px solid #4a4a4a; border-radius: 5px; background: linear-gradient(#fafafa, #c2c2c2); }
.palette input:checked::after { content: ""; width: 6px; height: 11px; margin-top: -3px; border: solid #111; border-width: 0 2px 2px 0; transform: rotate(38deg); }
.palettefoot { height: 52px; display: flex; justify-content: flex-end; align-items: center; padding-right: 16px; border-top: 1px solid #a8a8a8; }
.stop { height: 31px; padding: 0 6px; background: #ebebeb; border: 1px solid #b0b0b0; color: #555; font-size: 17px; }
```
